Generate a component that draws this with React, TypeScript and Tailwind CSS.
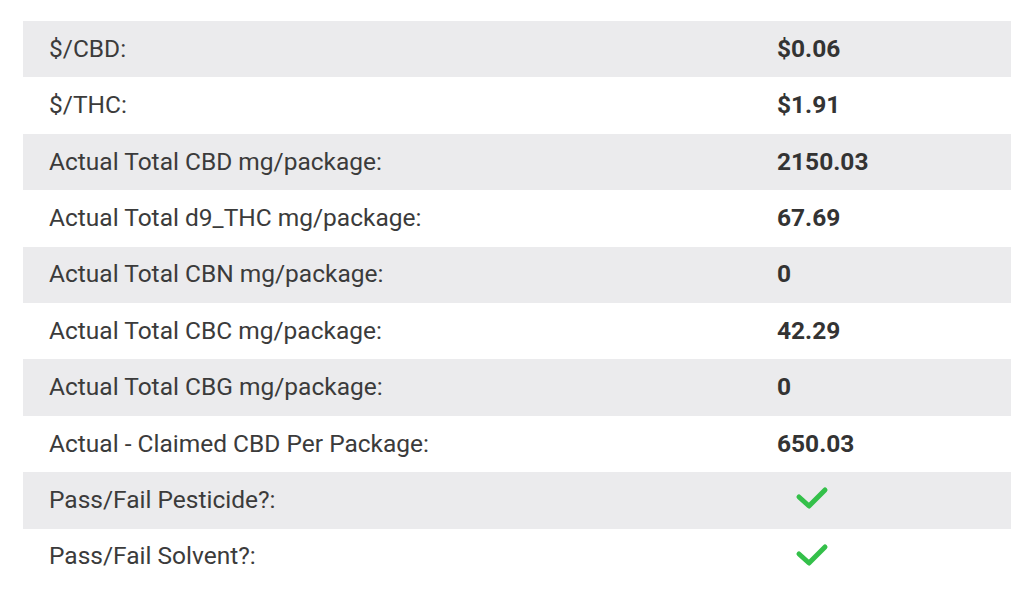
const rows: { label: string; value: string | null }[] = [
  { label: "$/CBD:", value: "$0.06" },
  { label: "$/THC:", value: "$1.91" },
  { label: "Actual Total CBD mg/package:", value: "2150.03" },
  { label: "Actual Total d9_THC mg/package:", value: "67.69" },
  { label: "Actual Total CBN mg/package:", value: "0" },
  { label: "Actual Total CBC mg/package:", value: "42.29" },
  { label: "Actual Total CBG mg/package:", value: "0" },
  { label: "Actual - Claimed CBD Per Package:", value: "650.03" },
  { label: "Pass/Fail Pesticide?:", value: null },
  { label: "Pass/Fail Solvent?:", value: null },
];

// green tick used for the pass/fail rows
function Check() {
  return (
    <svg width="34" height="26" viewBox="0 0 34 26" className="ml-[18px] -mt-[4px]">
      <polyline
        points="4,12 14,21 30,5"
        fill="none"
        stroke="#34c04a"
        strokeWidth="5"
        strokeLinecap="round"
        strokeLinejoin="round"
      />
    </svg>
  );
}

export default function App() {
  return (
    <div className="w-[1024px] h-[596px] bg-white pt-[21px] px-[23px] font-['Roboto',sans-serif]">
      <div className="w-[988px]">
        {rows.map((row, i) => (
          <div
            key={row.label}
            className={`flex items-center h-[56.4px] ${i % 2 === 0 ? "bg-[#ebebed]" : "bg-white"}`}
          >
            <div className="w-[754px] pl-[26px] text-[24.5px] text-[#3b3b3b]">{row.label}</div>
            <div className="flex-1 text-[24.5px] font-bold text-[#333333]">
              {row.value ?? <Check />}
            </div>
          </div>
        ))}
      </div>
    </div>
  );
}
